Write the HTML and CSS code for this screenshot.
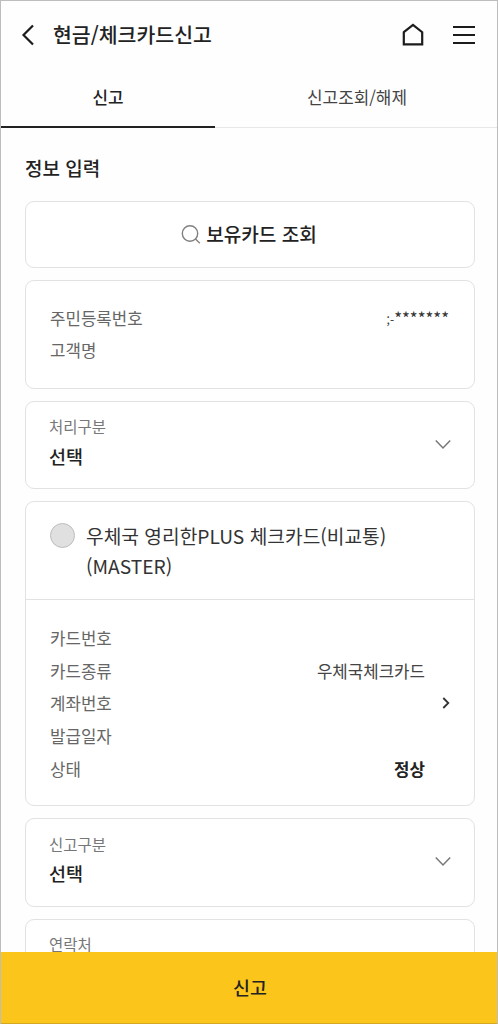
FILE: index.html
```html
<!DOCTYPE html>
<html lang="ko">
<head>
    <meta charset="UTF-8">
    <meta name="viewport" content="width=device-width, initial-scale=1.0">
    <title>현금/체크카드신고</title>
    <link rel="stylesheet" href="styles.css">
</head>
<body>
    <div class="app">
        <header class="header">
            <svg class="icon-back" width="14" height="22" viewBox="0 0 14 22"><path d="M12 1.5 2.5 11 12 20.5"/></svg>
            <h1>현금/체크카드신고</h1>
            <svg class="icon-home" width="24" height="24" viewBox="0 0 24 24"><path d="M2.8 9.2 12 2l9.2 7.2v12.2H2.8z"/></svg>
            <svg class="icon-menu" width="24" height="24" viewBox="0 0 24 24"><path d="M1 4h22M1 12h22M1 20h22"/></svg>
        </header>

        <nav class="tabs">
            <a class="tab active">신고</a>
            <a class="tab">신고조회/해제</a>
        </nav>

        <main class="content">
            <h2>정보 입력</h2>

            <button class="box search-button">
                <svg width="20" height="20" viewBox="0 0 20 20"><circle cx="9" cy="9.5" r="7.7"/><path d="m14.5 15 4.3 4.3"/></svg>
                보유카드 조회
            </button>

            <div class="box info">
                <div class="row"><span class="label">주민등록번호</span><span class="masked"><span class="masked-front">;-</span>*******</span></div>
                <div class="row"><span class="label">고객명</span></div>
            </div>

            <div class="box select">
                <div>
                    <div class="select-label">처리구분</div>
                    <div class="select-value">선택</div>
                </div>
                <svg class="arrow-down" width="18" height="11" viewBox="0 0 18 11"><path d="m1.8 1.5 7.2 7.5 7.2-7.5"/></svg>
            </div>

            <div class="box card">
                <div class="card-head">
                    <span class="radio"></span>
                    <div class="card-name">우체국 영리한PLUS 체크카드(비교통)<br>(MASTER)</div>
                </div>
                <div class="card-body">
                    <div class="row"><span class="label">카드번호</span></div>
                    <div class="row"><span class="label">카드종류</span><span class="value">우체국체크카드</span></div>
                    <div class="row">
                        <span class="label">계좌번호</span>
                        <svg class="arrow-right" width="8" height="12" viewBox="0 0 8 12"><path d="m1.3 1 5 5-5 5"/></svg>
                    </div>
                    <div class="row"><span class="label">발급일자</span></div>
                    <div class="row"><span class="label">상태</span><span class="value status">정상</span></div>
                </div>
            </div>

            <div class="box select">
                <div>
                    <div class="select-label">신고구분</div>
                    <div class="select-value">선택</div>
                </div>
                <svg class="arrow-down" width="18" height="11" viewBox="0 0 18 11"><path d="m1.8 1.5 7.2 7.5 7.2-7.5"/></svg>
            </div>

            <div class="box select">
                <div class="select-label">연락처</div>
            </div>
        </main>

        <button class="submit">신고</button>
    </div>
</body>
</html>
```

FILE: styles.css
```css
* { box-sizing: border-box; }
body {
    margin: 0;
    font-family: "Noto Sans CJK KR", sans-serif;
    color: #222;
    background-color: #fefefe;
}
h1, h2 { margin: 0; font-weight: 500; }
button { font-family: inherit; color: inherit; }
svg { display: block; flex: none; fill: none; stroke: #1c1c1c; }
.app {
    display: flex;
    flex-direction: column;
    height: 1024px;
    border: 1px solid #bdbdbd;
    border-bottom: 0;
    overflow: hidden;
}

/* 상단 */
.header {
    display: flex;
    align-items: center;
    flex: none;
    height: 67px;
    padding: 0 21px 0 20px;
}
.header h1 {
    flex: 1;
    margin-left: 18px;
    padding-bottom: 2px;
    font-size: 20.5px;
    line-height: 30px;
}
.icon-back { stroke-width: 2.2; }
.icon-home { stroke-width: 2.2; margin-right: 27px; }
.icon-menu { stroke-width: 2.2; }
.tabs {
    display: flex;
    flex: none;
    height: 60px;
    border-bottom: 1px solid #e8e8e8;
}
.tab {
    flex: 1;
    height: 60px;
    padding-left: 2px;
    font-size: 16.9px;
    line-height: 58px;
    text-align: center;
    color: #444;
}
.tab.active {
    flex: 0 0 214px;
    padding-left: 0;
    font-weight: 500;
    color: #222;
    border-bottom: 2px solid #222;
}

/* 본문 */
.content {
    display: flex;
    flex-direction: column;
    flex: 1;
    gap: 12px;
    min-height: 0;
    padding: 25px 22px 0 24px;
    overflow: hidden;
}
.content h2 {
    flex: none;
    margin-bottom: 7px;
    font-size: 19px;
    line-height: 29px;
}
.box {
    flex: none;
    border: 1px solid #e2e2e2;
    border-radius: 9px;
    background-color: #fff;
}
.search-button {
    display: flex;
    align-items: center;
    justify-content: center;
    gap: 5px;
    height: 66.5px;
    padding: 0 2px 0 0;
    font-size: 19.1px;
    font-weight: 500;
}
.search-button svg { stroke: #808080; stroke-width: 1.4; }
.info { height: 109px; padding: 21px 25px 0 24px; }
.row {
    display: flex;
    align-items: center;
    justify-content: space-between;
    height: 32.6px;
    font-size: 16.8px;
}
.label { color: #666; }
.value { margin-right: 25px; color: #444; }
.status { font-weight: 700; color: #222; }
.masked { color: #333; font-size: 16.8px; }
.masked-front { font-size: 12px; }
.select {
    display: flex;
    justify-content: space-between;
    height: 88.5px;
    padding: 12.5px 22px 0 23px;
}
.select-label { font-size: 15.5px; line-height: 24px; color: #777; }
.select-value { margin-top: 3.5px; font-size: 18.5px; font-weight: 500; line-height: 28px; }
.arrow-down { margin-top: 24.5px; stroke: #777; stroke-width: 1.5; }
.card { height: 305px; }
.card-head {
    display: flex;
    height: 98px;
    padding: 19px 24px 0;
    border-bottom: 1px solid #e2e2e2;
}
.radio {
    flex: none;
    width: 25px;
    height: 25px;
    margin: 2px 11px 0 0;
    border: 1px solid #bdbdbd;
    border-radius: 50%;
    background-color: #e0e0e0;
}
.card-name { font-size: 19.2px; line-height: 30px; color: #333; }
.card-body { padding: 22px 24px 0; }
.arrow-right { stroke: #333; stroke-width: 1.8; }

/* 하단 버튼 */
.submit {
    flex: none;
    height: 72px;
    margin: 0 -1px;
    padding: 0 0 2px 2px;
    border: 1px solid #d5a822;
    border-top: 0;
    background-color: #fcc51c;
    font-size: 18.4px;
    font-weight: 500;
}
```
